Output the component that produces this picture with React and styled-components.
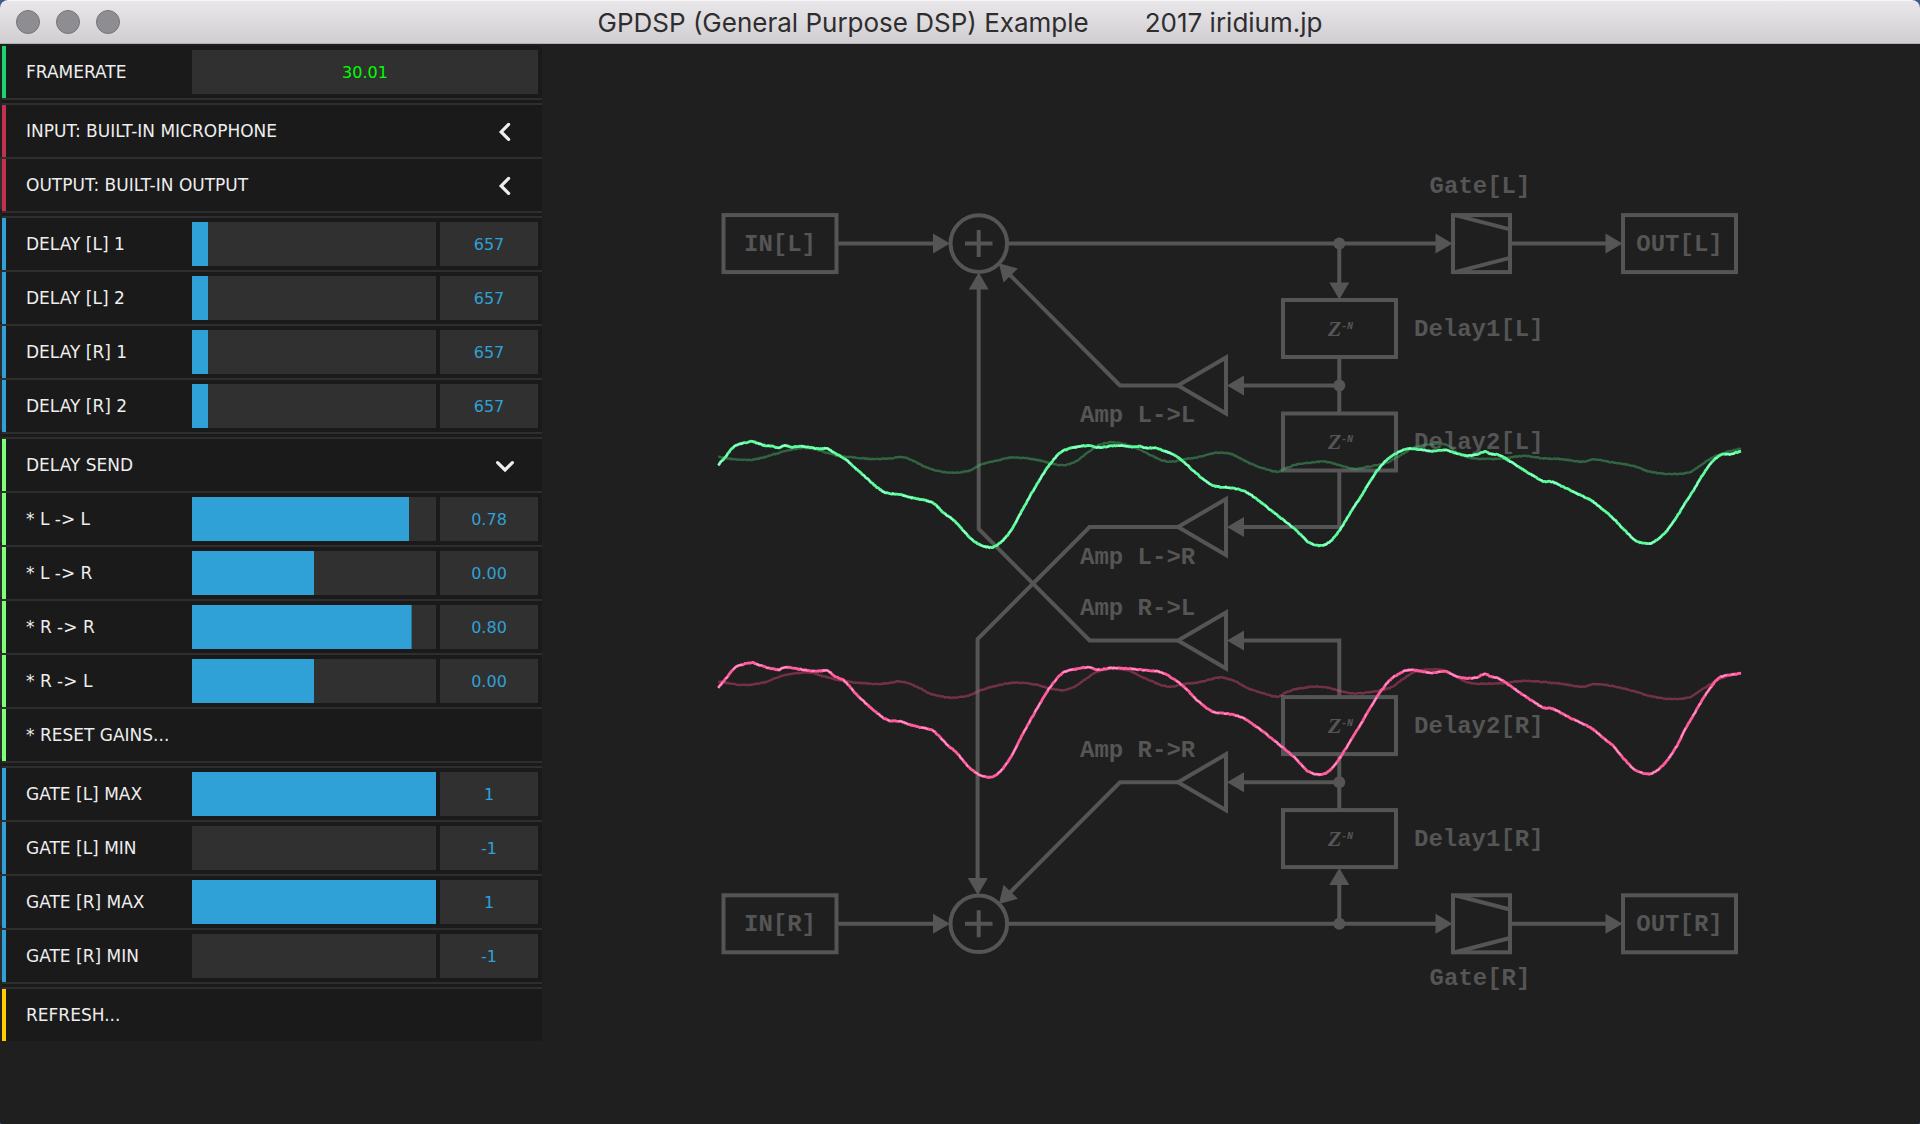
import React, { useState } from "react";
import styled, { createGlobalStyle } from "styled-components";

const GlobalStyle = createGlobalStyle`
  * { box-sizing: border-box; }
  body { margin: 0; background: #3a5a9a; }
`;

const Window = styled.div`
  display: flex;
  flex-direction: column;
  min-height: 100vh;
  background: #1f1f1f;
  border-radius: 8px 8px 2px 2px;
  overflow: hidden;
  font-family: Verdana, "DejaVu Sans", sans-serif;
`;

const TitleBar = styled.header`
  display: grid;
  grid-template-columns: 1fr auto 1fr;
  align-items: center;
  height: 44px;
  padding: 0 16px;
  background: linear-gradient(#e9e7ea, #d0ced1);
  border-top: 1px solid #f6f5f7;
  border-bottom: 1px solid #b0b1b1;
`;

const Lights = styled.div`
  display: flex;
  gap: 16px;
`;

const Light = styled.button`
  width: 24px;
  height: 24px;
  padding: 0;
  border: 1px solid #76757a;
  border-radius: 50%;
  background: #8e8d92;
`;

const Title = styled.h1`
  display: flex;
  gap: 56px;
  margin: 0;
  padding-top: 2px;
  font: 400 26px/32px Inter, "Liberation Sans", sans-serif;
  color: #2e2d2f;
  white-space: nowrap;
`;

const Body = styled.div`
  display: flex;
  flex: 1;
`;

const Sidebar = styled.aside`
  flex: none;
  width: 542px;
  padding: 2px 0 0 2px;
`;

const Group = styled.section`
  background: #1a1a1a;
  border-bottom: ${(p) => (p.$last ? 0 : 2)}px solid #2e2e2e;

  & + & {
    margin-top: 3px;
    border-top: 2px solid #2e2e2e;
  }
`;

const Panel = styled.div`
  background: #1a1a1a;
`;

const Row = styled.div`
  display: flex;
  align-items: center;
  height: 52px;
  padding-right: 4px;
  border-left: 4px solid ${(p) => p.$stripe};

  & + & {
    margin-top: 2px;
    box-shadow: 0 -2px #2e2e2e, -4px -2px #2e2e2e;
  }
`;

const RowLabel = styled.label`
  flex: none;
  width: 186px;
  padding-left: 20px;
  font-size: 17px;
  line-height: 24px;
  color: #eeeeee;
  white-space: nowrap;
`;

const RowButton = styled.button`
  display: flex;
  flex: 1;
  align-items: center;
  justify-content: space-between;
  height: 52px;
  padding: 0 22px 0 20px;
  border: 0;
  background: none;
  color: #eeeeee;
  font: 17px/24px Verdana, "DejaVu Sans", sans-serif;
  text-align: left;
`;

const Slider = styled.input`
  appearance: none;
  flex: 1;
  min-width: 0;
  height: 44px;
  margin: 0 4px 0 0;
  background: linear-gradient(#2fa1d6, #2fa1d6) left / var(--fill) 100% no-repeat #303030;

  &::-webkit-slider-thumb {
    appearance: none;
    width: 1px;
    height: 44px;
    background: transparent;
  }
`;

const Value = styled.input`
  flex: ${(p) => (p.$wide ? "1" : "none")};
  width: 98px;
  min-width: 0;
  height: 44px;
  padding: 0;
  border: 0;
  background: #303030;
  color: ${(p) => (p.$wide ? "#00ff00" : "#2fa1d6")};
  font: 16px/24px Verdana, "DejaVu Sans", sans-serif;
  text-align: center;
`;

const Stage = styled.main`
  display: flex;
  flex: 1;
  min-width: 0;
`;

const Diagram = styled.svg`
  display: block;
  width: 100%;
  height: 100%;
  font: 700 24px "Courier New", "Liberation Mono", monospace;
`;

const STRIPES = { green: "#1ed36f", red: "#c2324f", blue: "#2fa1d6", lime: "#7eff7a", yellow: "#ffcc00" };

const DELAYS = ["DELAY [L] 1", "DELAY [L] 2", "DELAY [R] 1", "DELAY [R] 2"];
const SENDS = [
  ["* L -> L", 0.78],
  ["* L -> R", 0],
  ["* R -> R", 0.8],
  ["* R -> L", 0],
];
const GATES = [
  ["GATE [L] MAX", 1],
  ["GATE [L] MIN", -1],
  ["GATE [R] MAX", 1],
  ["GATE [R] MIN", -1],
];

function Chevron({ open }) {
  return (
    <svg
      width="20"
      height="20"
      viewBox="0 0 20 20"
      fill="none"
      stroke="currentColor"
      strokeWidth="3.2"
      strokeLinecap="round"
      overflow="visible"
      aria-hidden="true"
    >
      <path d={open ? "M1.6 7.6L9 15l7.4-7.4" : "M12.6 3.4L5.2 10.9l7.4 7.5"} />
    </svg>
  );
}

function SliderRow({ label, initial, min, max, step, digits = 0, stripe }) {
  const [value, setValue] = useState(initial);
  const id = label.replace(/[^A-Za-z0-9]/g, "-");
  const change = (e) => setValue(Number(e.target.value) || 0);
  return (
    <Row $stripe={stripe}>
      <RowLabel htmlFor={id}>{label}</RowLabel>
      <Slider
        id={id}
        type="range"
        min={min}
        max={max}
        step={step}
        value={value}
        onChange={change}
        style={{ "--fill": `${((value - min) / (max - min)) * 100}%` }}
      />
      <Value aria-label={`${label} value`} value={value.toFixed(digits)} onChange={change} />
    </Row>
  );
}

function Foldout({ label, stripe, open }) {
  return (
    <Row $stripe={stripe}>
      <RowButton type="button" aria-expanded={!!open}>
        {label}
        <Chevron open={open} />
      </RowButton>
    </Row>
  );
}

function Action({ label, stripe }) {
  return (
    <Row $stripe={stripe}>
      <RowButton type="button">{label}</RowButton>
    </Row>
  );
}

/* Small repeatable noise in -0.5..0.5, for the grain of the live signal. */
const noise = (n) => {
  const v = Math.sin(n * 12.9898) * 43758.5453;
  return v - Math.floor(v) - 0.5;
};

/* Each trace is a list of segments: an origin and samples at 2.8 x 3 units per pixel.
   The samples are joined by a Catmull-Rom curve, one vertex per pixel. */
function toPoints(segments, grain = 0.9) {
  const pts = segments.flatMap(([ox, oy, s]) =>
    s.split(" ").map((pair) => {
      const [x, y] = pair.split(",").map(Number);
      return [ox + x / 2.8, oy + y / 3];
    })
  );
  const out = [];
  for (let i = 0; i < pts.length - 1; i++) {
    const p0 = pts[i - 1] || pts[i];
    const p1 = pts[i];
    const p2 = pts[i + 1];
    const p3 = pts[i + 2] || p2;
    const dx = p2[0] - p1[0];
    const m1 = ((p2[1] - p0[1]) / (p2[0] - p0[0])) * dx;
    const m2 = ((p3[1] - p1[1]) / (p3[0] - p1[0])) * dx;
    const steps = Math.max(1, Math.round(dx));
    for (let k = 0; k < steps; k++) {
      const t = k / steps;
      const t2 = t * t;
      const t3 = t2 * t;
      const y =
        (2 * t3 - 3 * t2 + 1) * p1[1] + (t3 - 2 * t2 + t) * m1 + (3 * t2 - 2 * t3) * p2[1] + (t3 - t2) * m2;
      const x = p1[0] + t * dx;
      out.push(`${x.toFixed(1)},${(y + noise(x) * grain).toFixed(1)}`);
    }
  }
  const last = pts[pts.length - 1];
  out.push(`${last[0].toFixed(1)},${last[1].toFixed(1)}`);
  return out.join(" ");
}

const GREEN = toPoints([
  [700, 420, "51,135 70,112 90,85 110,72 130,68 145,64 160,69 180,76 200,78 218,83 238,76 255,81 290,79 312,83 335,86 357,86 375,98 405,116 430,140 460,168 490,197 520,218 560,224 600,235 630,241 655,251 685,281 715,305 745,341 770,365 790,377 815,382 835,373 865,340 900,275 935,208 970,147 1000,107 1020,91 1050,82 1085,77 1115,82 1150,78 1180,77 1210,81 1230,79 1250,84 1275,84 1300,93 1325,104 1350,122 1385,156 1410,178 1440,198 1475,202 1515,210 1540,223 1568,245"],
  [1200, 160, "200,1052 230,1077 265,1107 290,1133 305,1147 335,1157 355,1151 375,1133 395,1104 420,1060 450,1010 490,941 520,903 545,883 580,867 620,869 655,874 685,870 720,880 750,887 775,883 797,875 815,882 840,886 862,900 890,919 930,945 962,964 985,965 1020,982 1060,1003 1095,1021 1130,1050 1160,1078 1190,1112 1220,1142 1240,1149 1260,1151 1280,1139 1305,1115 1330,1078 1355,1035 1385,985 1410,940 1435,905 1458,885 1485,882 1515,874"],
]);
const GREEN_DIM = toPoints([
  [700, 420, "51,110 75,115 125,120 160,117 200,105 240,93 280,85 310,85 345,95 385,107 420,111 480,117 535,115 567,111 600,124 640,145 700,158 750,153 790,132 830,122 870,113 930,117 980,129 1010,136 1050,126 1080,102 1115,76 1150,67 1190,73 1230,88 1270,110 1310,125 1350,119 1400,110 1450,98 1490,103 1530,125 1568,142"],
  [1200, 160, "215,935 240,925 270,914 310,908 350,905 385,914 430,926 470,920 520,909 555,890 600,862 660,852 690,855 720,878 760,894 840,896 910,888 960,895 1010,897 1070,905 1105,898 1150,906 1210,917 1260,935 1320,942 1370,937 1405,913 1440,890 1475,876 1515,866"],
]);
const PINK = toPoints([
  [700, 640, "51,143 75,112 95,86 115,75 145,68 165,75 190,83 220,89 238,82 270,86 305,92 330,93 357,93 380,110 405,124 440,165 480,205 525,240 560,244 600,258 630,265 655,274 690,312 720,340 750,378 780,403 810,412 835,400 865,360 900,290 935,222 975,150 1000,115 1020,96 1050,88 1085,82 1115,89 1150,84 1210,87 1250,91 1280,94 1305,103 1350,136 1400,188 1440,217 1480,221 1520,234 1568,268"],
  [1200, 600, "200,415 230,441 265,473 290,502 305,515 335,524 358,516 385,484 420,425 450,372 490,300 525,248 550,226 583,210 620,214 655,219 685,214 720,229 750,235 775,232 797,222 815,230 840,237 865,255 900,281 962,323 985,325 1030,350 1095,384 1130,414 1155,436 1190,480 1220,511 1255,522 1275,515 1305,485 1335,438 1360,385 1390,330 1415,285 1445,242 1460,230 1515,220"],
]);
const PINK_DIM = toPoints([
  [700, 640, "51,125 125,135 180,127 220,111 260,101 310,98 350,110 410,124 500,132 567,125 610,142 650,163 705,173 750,167 790,149 870,129 930,132 1010,151 1045,142 1080,117 1110,96 1150,86 1200,92 1250,117 1310,140 1350,133 1400,126 1455,113 1500,124 1530,143 1568,157"],
  [1200, 600, "215,290 240,278 270,267 340,260 430,280 530,264 565,240 600,216 660,208 695,216 750,247 840,250 910,243 1010,251 1070,260 1105,252 1150,257 1210,272 1260,288 1320,297 1370,292 1405,268 1450,240 1480,227 1515,218"],
]);

const INK = "#555555";

function Arrow({ x, y, angle = 0 }) {
  return <path d="M0 0L-17 -10V10Z" fill={INK} stroke="none" transform={`translate(${x} ${y}) rotate(${angle})`} />;
}

function Box({ x, y, children }) {
  return (
    <g>
      <rect x={x - 56.5} y={y - 28.5} width="113" height="57" />
      {children && (
        <text x={x} y={y + 7} textAnchor="middle" fill={INK} stroke="none">
          {children}
        </text>
      )}
    </g>
  );
}

function DelayBox({ y, name }) {
  return (
    <g>
      <Box x={1339.5} y={y} />
      <g fill={INK} stroke="none">
        <text x="1328" y={y + 7} fontSize="22" fontStyle="italic" fontFamily="'Liberation Serif', serif">
          Z
        </text>
        <text x="1341" y={y} fontSize="10" fontStyle="italic" fontFamily="'Liberation Mono', monospace">
          -N
        </text>
        <text x="1414" y={y + 7}>{name}</text>
      </g>
    </g>
  );
}

function Amp({ y, name, labelY }) {
  return (
    <g>
      <path d={`M1178 ${y}L1226 ${y - 28}V${y + 28}Z`} />
      <Arrow x={1227} y={y} angle={180} />
      <text x="1080" y={labelY} fill={INK} stroke="none">
        {name}
      </text>
    </g>
  );
}

function Channel({ y, side, labelY }) {
  return (
    <g>
      <Box x={780} y={y}>{`IN[${side}]`}</Box>
      <circle cx="978.8" cy={y} r="28.3" />
      <path d={`M965 ${y}H992.5M978.7 ${y - 13.5}V${y + 13.5}M838 ${y}H936M1008 ${y}H1438M1511 ${y}H1608`} />
      <Arrow x={950} y={y} />
      <Arrow x={1452.5} y={y} />
      <Arrow x={1622.5} y={y} />
      <circle cx="1339.3" cy={y} r="6" fill={INK} stroke="none" />
      <rect x="1453" y={y - 28.5} width="57" height="57" />
      <path d={`M1455 ${y - 28.5}L1509 ${y - 14.5}M1455 ${y + 28.5}L1509 ${y + 14.5}`} />
      <text x="1480" y={labelY} textAnchor="middle" fill={INK} stroke="none">{`Gate[${side}]`}</text>
      <Box x={1679.5} y={y}>{`OUT[${side}]`}</Box>
    </g>
  );
}

function Trace({ points, dim, color, core }) {
  return (
    <g fill="none" strokeLinejoin="round">
      <polyline points={points} stroke={color} strokeWidth={dim ? 2.4 : 2.8} opacity={dim ? 0.45 : 1} />
      {!dim && <polyline points={points} stroke={core} strokeWidth="1.4" strokeDasharray="7 5 3 9 11 14" opacity="0.8" />}
    </g>
  );
}

function SignalGraph() {
  return (
    <Diagram viewBox="542 44 1378 1080" role="img" aria-label="Signal flow">
      <g fill="none" stroke={INK} strokeWidth="4">
        <Channel y={243.6} side="L" labelY={193} />
        <Channel y={923.8} side="R" labelY={985} />

        <path d="M1339.3 243V284M1339.3 357V413M1241 385.4H1339.3M1339.3 471V527H1241" />
        <path d="M1339.3 924V883M1339.3 810V754M1241 782.3H1339.3M1339.3 697V640.4H1241" />
        <circle cx="1339.3" cy="385.4" r="6" fill={INK} stroke="none" />
        <circle cx="1339.3" cy="782.3" r="6" fill={INK} stroke="none" />
        <Arrow x={1339.3} y={299.5} angle={90} />
        <Arrow x={1339.3} y={868} angle={-90} />

        <DelayBox y={328.5} name="Delay1[L]" />
        <DelayBox y={442} name="Delay2[L]" />
        <DelayBox y={725.6} name="Delay2[R]" />
        <DelayBox y={838.6} name="Delay1[R]" />

        <Amp y={385.4} name="Amp L-&gt;L" labelY={422} />
        <Amp y={527} name="Amp L-&gt;R" labelY={564} />
        <Amp y={640.4} name="Amp R-&gt;L" labelY={615} />
        <Amp y={782.3} name="Amp R-&gt;R" labelY={757} />

        <path d="M1179 385.4H1120L1010 275" />
        <path d="M1179 782.3H1120L1010 892.5" />
        <Arrow x={998.9} y={263.3} angle={-134} />
        <Arrow x={998.9} y={904} angle={134} />

        <path d="M1179 527H1089.6L977.6 639V880" />
        <path d="M1179 640.4H1089.6L978.7 529V287" />
        <Arrow x={977.8} y={895} angle={90} />
        <Arrow x={978.7} y={272.5} angle={-90} />
      </g>

      <Trace points={GREEN_DIM} color="#46b86c" dim />
      <Trace points={GREEN} color="#5cfc9c" core="#a8ffe0" />
      <Trace points={PINK_DIM} color="#d84878" dim />
      <Trace points={PINK} color="#ff5c9c" core="#ffa8e0" />
    </Diagram>
  );
}

export default function App() {
  return (
    <Window>
      <GlobalStyle />
      <TitleBar>
        <Lights>
          <Light type="button" aria-label="Close" />
          <Light type="button" aria-label="Minimize" />
          <Light type="button" aria-label="Zoom" />
        </Lights>
        <Title>
          <span>GPDSP (General Purpose DSP) Example</span>
          <span>2017 iridium.jp</span>
        </Title>
      </TitleBar>
      <Body>
        <Sidebar>
          <Panel>
            <Group>
              <Row $stripe={STRIPES.green}>
                <RowLabel htmlFor="framerate">FRAMERATE</RowLabel>
                <Value id="framerate" $wide readOnly value="30.01" />
              </Row>
            </Group>
            <Group>
              <Foldout label="INPUT: BUILT-IN MICROPHONE" stripe={STRIPES.red} />
              <Foldout label="OUTPUT: BUILT-IN OUTPUT" stripe={STRIPES.red} />
            </Group>
            <Group>
              {DELAYS.map((label) => (
                <SliderRow key={label} label={label} initial={657} min={0} max={10000} step={1} stripe={STRIPES.blue} />
              ))}
            </Group>
            <Group>
              <Foldout label="DELAY SEND" stripe={STRIPES.lime} open />
              {SENDS.map(([label, gain]) => (
                <SliderRow key={label} label={label} initial={gain} min={-1} max={1} step={0.01} digits={2} stripe={STRIPES.lime} />
              ))}
              <Action label="* RESET GAINS..." stripe={STRIPES.lime} />
            </Group>
            <Group>
              {GATES.map(([label, level]) => (
                <SliderRow key={label} label={label} initial={level} min={-1} max={1} step={1} stripe={STRIPES.blue} />
              ))}
            </Group>
            <Group $last>
              <Action label="REFRESH..." stripe={STRIPES.yellow} />
            </Group>
          </Panel>
        </Sidebar>
        <Stage>
          <SignalGraph />
        </Stage>
      </Body>
    </Window>
  );
}
